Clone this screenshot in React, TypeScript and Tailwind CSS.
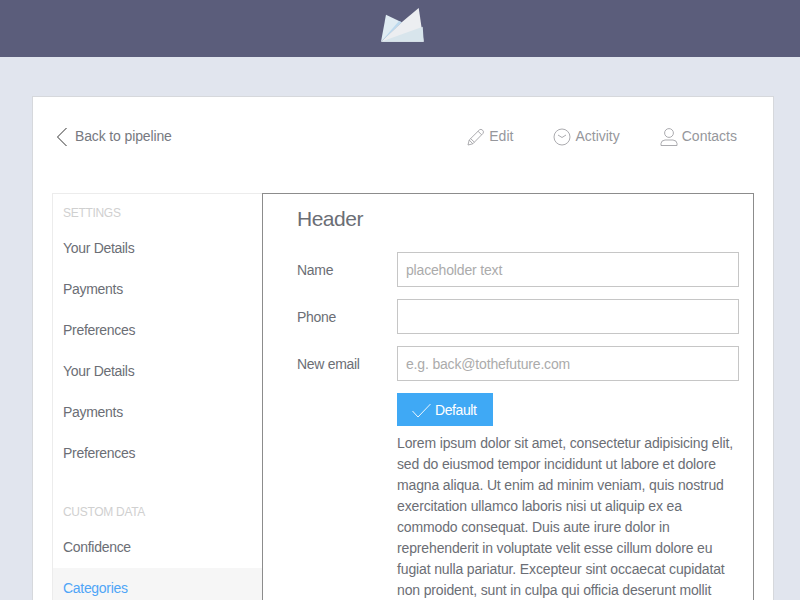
import React from "react";

const font = { fontFamily: '"Liberation Sans", Arial, sans-serif' };

function Logo() {
  return (
    <svg width="44" height="35" viewBox="0 0 44 35" className="block">
      <polygon points="5,6.7 0,33.7 20.7,14.3" fill="#e0ecf3" />
      <polygon points="20.7,14.3 37.7,0 42.7,33.7 0,33.7" fill="#eceef1" />
      <polygon points="0,33.7 41.7,18.7 42.7,33.7" fill="#d8e5ec" />
      <polygon points="0,33.7 18,13 20.7,14.3" fill="#bcd9ee" />
    </svg>
  );
}

function NavItem({ icon, label }: { icon: React.ReactNode; label: string }) {
  return (
    <div className="flex items-center gap-[4px] text-[14px] text-[#96979c]">
      {icon}
      <span>{label}</span>
    </div>
  );
}

function Field({ label, placeholder }: { label: string; placeholder?: string }) {
  return (
    <div className="flex items-center h-[35px]">
      <div className="w-[100px] pt-[1px] text-[14px] tracking-[-0.3px] text-[#6b6e75]">{label}</div>
      <div className="w-[342px] h-[35px] border border-[#c6c6c6] px-[8px] pt-[1px] flex items-center text-[14px] tracking-[-0.17px] text-[#ababab]">
        {placeholder}
      </div>
    </div>
  );
}

function SideItem({ children, active }: { children: string; active?: boolean }) {
  return (
    <div
      className={`h-[41px] pl-[10px] flex items-center text-[14px] tracking-[-0.3px] ${
        active ? "bg-[#f6f6f6] text-[#4fa5f7]" : "text-[#6b6e75]"
      }`}
    >
      {children}
    </div>
  );
}

function SideHead({ children }: { children: string }) {
  return <div className="pl-[10px] text-[12px] tracking-[-0.3px] leading-[14px] text-[#d0d0d0]">{children}</div>;
}

export default function App() {
  return (
    <div style={font} className="w-[800px] h-[600px] overflow-hidden bg-[#e1e5ee]">
      <header className="h-[57px] bg-[#5b5d7b] flex justify-center pt-[8px]">
        <div className="ml-[5px]">
          <Logo />
        </div>
      </header>
      <main className="ml-[32px] mt-[39px] w-[742px] h-[600px] bg-white border border-[#d6d8dc] pl-[19px] pr-[19px]">
        <div className="h-[96px] flex items-center justify-between pb-[17px] pr-[17px]">
          <div className="flex items-center gap-[5px] text-[14px] tracking-[-0.13px] text-[#777980]">
            <svg width="16" height="20" viewBox="0 0 16 20" fill="none" stroke="#333" strokeWidth="1" className="ml-[2px]">
              <path d="M12.5 1 L3.5 10 L12.5 19" />
            </svg>
            <span>Back to pipeline</span>
          </div>
          <div className="flex items-center gap-[40px]">
            <NavItem
              label="Edit"
              icon={
                <svg width="18" height="18" viewBox="0 0 18 18" fill="none" stroke="#a2a2a6" strokeWidth="0.9">
                  <path d="M1 17 L2.2 12 L12.5 1.8 Q14 0.6 15.6 2.2 Q17.2 3.8 16 5.4 L5.8 15.8 Z" />
                  <path d="M2.2 12 L5.8 15.8 M3.6 10.6 L7.4 14.2 M11 3.2 L14.6 6.8" />
                </svg>
              }
            />
            <NavItem
              label="Activity"
              icon={
                <svg width="18" height="18" viewBox="0 0 18 18" fill="none" stroke="#a2a2a6" strokeWidth="0.9">
                  <circle cx="9" cy="9" r="8" />
                  <path d="M5 7 L9 9.5 L13 7" />
                </svg>
              }
            />
            <NavItem
              label="Contacts"
              icon={
                <svg width="18" height="18" viewBox="0 0 18 18" fill="none" stroke="#a2a2a6" strokeWidth="0.9">
                  <circle cx="9" cy="5" r="4.4" />
                  <path d="M1 17.5 V15.5 Q1 12.5 5 12 H13 Q17 12.5 17 15.5 V17.5 Z" />
                </svg>
              }
            />
          </div>
        </div>
        <div className="flex h-[500px]">
          <aside className="w-[210px] border-l border-t border-[#ececec] pt-[12px]">
            <SideHead>SETTINGS</SideHead>
            <div className="pt-[8px]">
              <SideItem>Your Details</SideItem>
              <SideItem>Payments</SideItem>
              <SideItem>Preferences</SideItem>
              <SideItem>Your Details</SideItem>
              <SideItem>Payments</SideItem>
              <SideItem>Preferences</SideItem>
            </div>
            <div className="mt-[31px]">
              <SideHead>CUSTOM DATA</SideHead>
            </div>
            <div className="pt-[8px]">
              <SideItem>Confidence</SideItem>
              <SideItem active>Categories</SideItem>
            </div>
          </aside>
          <section className="w-[492px] border border-[#8c8c8c] pl-[34px] pr-[14px]">
            <h1 className="text-[21px] tracking-[-0.5px] leading-[24px] text-[#6b6e75] pt-[13px]">Header</h1>
            <div className="mt-[21px] flex flex-col gap-[12px]">
              <Field label="Name" placeholder="placeholder text" />
              <Field label="Phone" />
              <Field label="New email" placeholder="e.g. back@tothefuture.com" />
            </div>
            <div className="ml-[100px] mt-[12px]">
              <div className="w-[96px] h-[33px] bg-[#3fa9f5] flex items-center pl-[15px] pt-[1px] gap-[4px] text-[14px] tracking-[-0.4px] text-white">
                <svg width="19" height="15" viewBox="0 0 19 15" fill="none" stroke="#fff" strokeWidth="0.9">
                  <path d="M0.5 8 L6 14 L18.5 1" />
                </svg>
                <span>Default</span>
              </div>
              <p className="mt-[7px] w-[350px] whitespace-nowrap text-[14px] tracking-[-0.14px] leading-[21px] text-[#6b6e75]">
                Lorem ipsum dolor sit amet, consectetur adipisicing elit,
                <br />
                sed do eiusmod tempor incididunt ut labore et dolore
                <br />
                magna aliqua. Ut enim ad minim veniam, quis nostrud
                <br />
                exercitation ullamco laboris nisi ut aliquip ex ea
                <br />
                commodo consequat. Duis aute irure dolor in
                <br />
                reprehenderit in voluptate velit esse cillum dolore eu
                <br />
                fugiat nulla pariatur. Excepteur sint occaecat cupidatat
                <br />
                non proident, sunt in culpa qui officia deserunt mollit
              </p>
            </div>
          </section>
        </div>
      </main>
    </div>
  );
}
